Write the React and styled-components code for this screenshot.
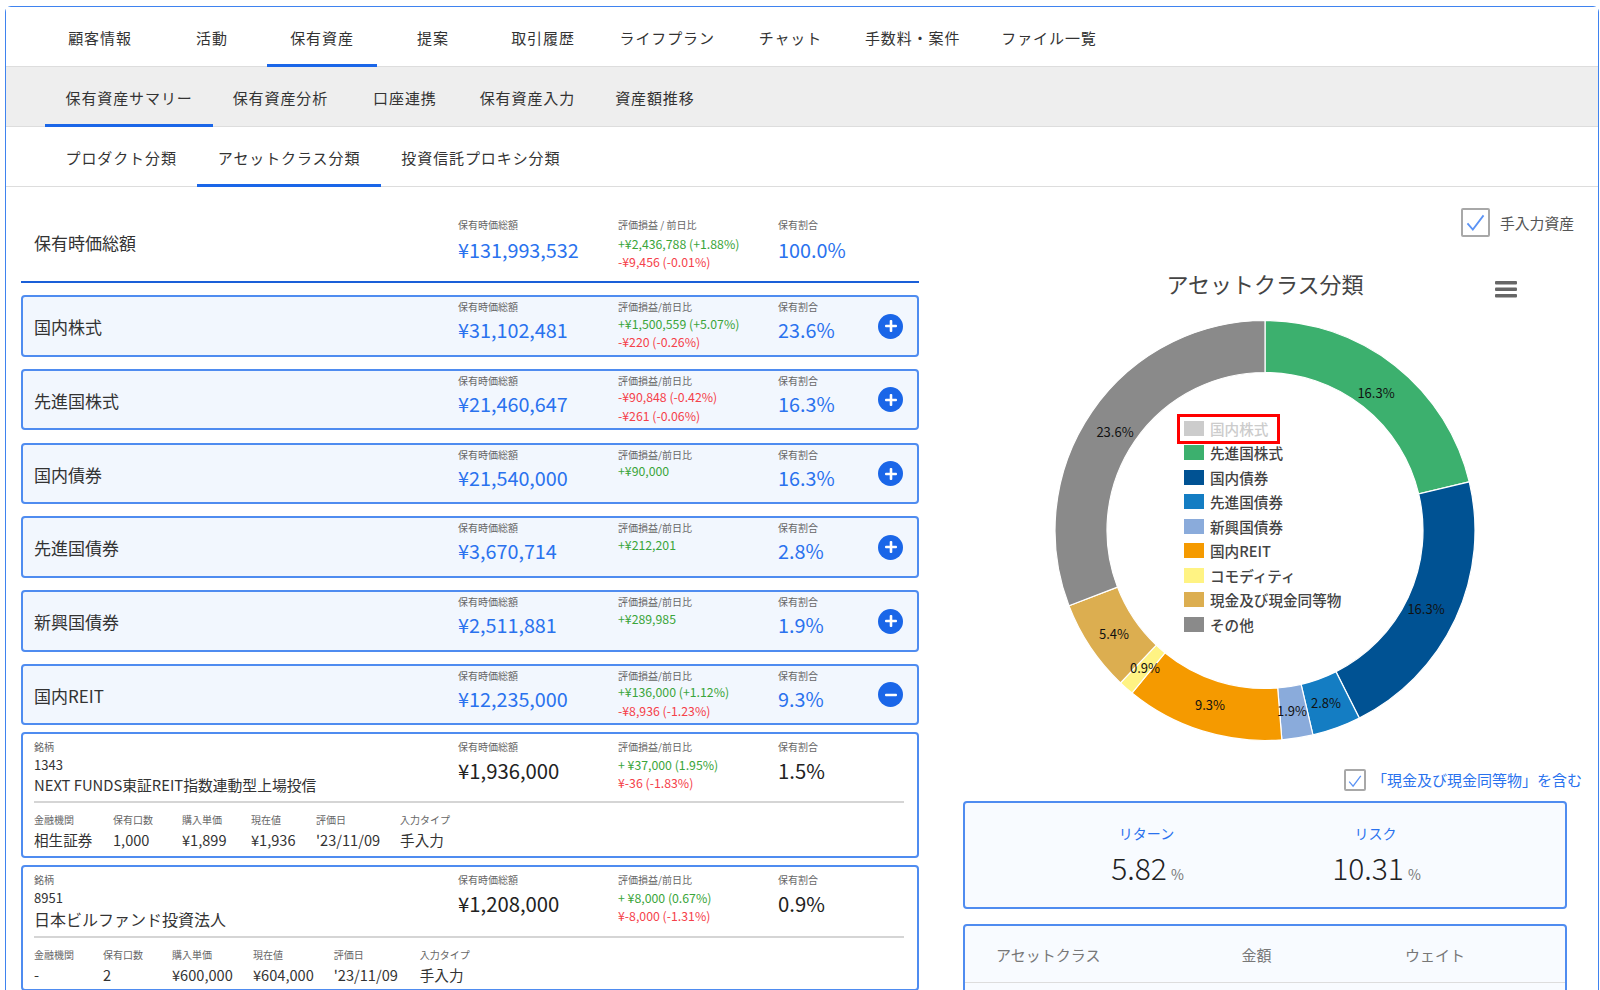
// App.jsx

import React from 'react';
import styled, { createGlobalStyle, css } from "styled-components";

const mainTabs = [
    { label: '顧客情報' },
    { label: '活動', shift: 2 },
    { label: '保有資産' },
    { label: '提案', shift: 1 },
    { label: '取引履歴' },
    { label: 'ライフプラン' },
    { label: 'チャット', shift: -1 },
    { label: '手数料・案件', shift: -2 },
    { label: 'ファイル一覧', shift: -2 },
];
const subTabs = [
    { label: '保有資産サマリー' },
    { label: '保有資産分析', shift: -1 },
    { label: '口座連携', shift: 4 },
    { label: '保有資産入力', shift: 2 },
    { label: '資産額推移', shift: -1 },
];
const classTabs = [
    { label: 'プロダクト分類' },
    { label: 'アセットクラス分類' },
    { label: '投資信託プロキシ分類' },
];

const classRows = [
    { name: '国内株式', total: '¥31,102,481', gain: '+¥1,500,559 (+5.07%)', day: '-¥220 (-0.26%)', share: '23.6%' },
    { name: '先進国株式', total: '¥21,460,647', loss: '-¥90,848 (-0.42%)', day: '-¥261 (-0.06%)', share: '16.3%' },
    { name: '国内債券', total: '¥21,540,000', gain: '+¥90,000', share: '16.3%' },
    { name: '先進国債券', total: '¥3,670,714', gain: '+¥212,201', share: '2.8%' },
    { name: '新興国債券', total: '¥2,511,881', gain: '+¥289,985', share: '1.9%' },
    { name: '国内REIT', total: '¥12,235,000', gain: '+¥136,000 (+1.12%)', day: '-¥8,936 (-1.23%)', share: '9.3%', open: true },
];

const holdings = [
    {
        code: '1343', name: 'NEXT FUNDS東証REIT指数連動型上場投信', nameSize: 14.8, total: '¥1,936,000',
        gain: '+ ¥37,000 (1.95%)', day: '¥-36 (-1.83%)', share: '1.5%',
        cells: [
            { label: '金融機関', value: '相生証券', min: 59 },
            { label: '保有口数', value: '1,000', min: 49 },
            { label: '購入単価', value: '¥1,899', min: 49 },
            { label: '現在値', value: '¥1,936', min: 45 },
            { label: '評価日', value: "'23/11/09", min: 64 },
            { label: '入力タイプ', value: '手入力', min: 49 },
        ],
    },
    {
        code: '8951', name: '日本ビルファンド投資法人', nameSize: 16, total: '¥1,208,000',
        gain: '+ ¥8,000 (0.67%)', day: '¥-8,000 (-1.31%)', share: '0.9%',
        cells: [
            { label: '金融機関', value: '-', min: 49 },
            { label: '保有口数', value: '2', min: 49 },
            { label: '購入単価', value: '¥600,000', min: 61 },
            { label: '現在値', value: '¥604,000', min: 60 },
            { label: '評価日', value: "'23/11/09", min: 66 },
            { label: '入力タイプ', value: '手入力', min: 49 },
        ],
    },
];

const slices = [
    { from: 0, to: 76.6, color: '#3cb06e' },
    { from: 76.6, to: 153.3, color: '#005293' },
    { from: 153.3, to: 166.8, color: '#147dc3' },
    { from: 166.8, to: 175.4, color: '#8aabdb' },
    { from: 175.4, to: 219.3, color: '#f59a00' },
    { from: 219.3, to: 223.5, color: '#fff383' },
    { from: 223.5, to: 249, color: '#dcae50' },
    { from: 249, to: 360, color: '#8a8a8a' },
];

const sliceLabels = [
    { x: 413, y: 82, text: '16.3%' },
    { x: 463, y: 298, text: '16.3%' },
    { x: 363, y: 392, text: '2.8%' },
    { x: 329, y: 400, text: '1.9%' },
    { x: 247, y: 394, text: '9.3%' },
    { x: 182, y: 357, text: '0.9%' },
    { x: 151, y: 323, text: '5.4%' },
    { x: 152, y: 121, text: '23.6%' },
];

const legend = [
    { name: '国内株式', color: '#cccccc', off: true },
    { name: '先進国株式', color: '#3cb06e' },
    { name: '国内債券', color: '#005293' },
    { name: '先進国債券', color: '#147dc3' },
    { name: '新興国債券', color: '#8aabdb' },
    { name: '国内REIT', color: '#f59a00' },
    { name: 'コモディティ', color: '#fff383' },
    { name: '現金及び現金同等物', color: '#dcae50' },
    { name: 'その他', color: '#8a8a8a' },
];

const point = (deg, r) => {
    const a = (deg - 90) * Math.PI / 180;
    return `${(302 + r * Math.cos(a)).toFixed(2)} ${(220.5 + r * Math.sin(a)).toFixed(2)}`;
};

const arcPath = (from, to) => {
    const big = to - from > 180 ? 1 : 0;
    return `M${point(from, 210)} A210 210 0 ${big} 1 ${point(to, 210)} L${point(to, 158)} A158 158 0 ${big} 0 ${point(from, 158)} Z`;
};

const Stat = ({ label, value, dark, top }) => (
    <StatCol>
        <StatLabel>{label}</StatLabel>
        <StatValue $dark={dark} $top={top}>{value}</StatValue>
    </StatCol>
);

const Change = ({ label, gain, loss, day, top }) => (
    <StatCol>
        <StatLabel>{label}</StatLabel>
        <ChangeLines $top={top}>
            {gain && <ChangeLine $color="#3aa53a">{gain}</ChangeLine>}
            {loss && <ChangeLine $color="#f5414a">{loss}</ChangeLine>}
            {day && <ChangeLine $color="#f5414a">{day}</ChangeLine>}
        </ChangeLines>
    </StatCol>
);

const Check = ({ size }) => (
    <CheckBox $size={size}>
        <svg width="100%" height="100%" viewBox="0 0 28 28">
            <polyline points="5,15 11,22 23,6" fill="none" stroke="#5b93f5" strokeWidth="2" />
        </svg>
    </CheckBox>
);

const App = () => {
    return (
        <>
            <GlobalStyle />
            <Frame>
                <TabRow>
                    {mainTabs.map((t) => <MainTab key={t.label} $shift={t.shift} $active={t.label === '保有資産'}>{t.label}</MainTab>)}
                </TabRow>
                <TabRow $gray>
                    {subTabs.map((t) => <Tab key={t.label} $shift={t.shift} $active={t.label === '保有資産サマリー'}>{t.label}</Tab>)}
                </TabRow>
                <TabRow>
                    {classTabs.map((t) => <Tab key={t.label} $active={t.label === 'アセットクラス分類'}>{t.label}</Tab>)}
                </TabRow>

                <Main>
                    <LeftCol>
                        <SummaryRow>
                            <SummaryTitle>保有時価総額</SummaryTitle>
                            <Stat label="保有時価総額" value="¥131,993,532" top={6} />
                            <Change label="評価損益 / 前日比" gain="+¥2,436,788 (+1.88%)" day="-¥9,456 (-0.01%)" top={2.5} />
                            <Stat label="保有割合" value="100.0%" top={6} />
                        </SummaryRow>

                        {classRows.map((row) => (
                            <ClassCard key={row.name} $open={row.open}>
                                <ClassName>{row.name}</ClassName>
                                <Stat label="保有時価総額" value={row.total} top={4} />
                                <Change label="評価損益/前日比" gain={row.gain} loss={row.loss} day={row.day} top={0.5} />
                                <Stat label="保有割合" value={row.share} top={4} />
                                <RoundButton>
                                    <svg width="14" height="14" viewBox="0 0 14 14">
                                        <rect x="1" y="5.7" width="12" height="2.6" rx="1" fill="#fff" />
                                        {!row.open && <rect x="5.7" y="1" width="2.6" height="12" rx="1" fill="#fff" />}
                                    </svg>
                                </RoundButton>
                            </ClassCard>
                        ))}

                        {holdings.map((h) => (
                            <HoldingCard key={h.code}>
                                <HoldingTop>
                                    <div>
                                        <StatLabel>銘柄</StatLabel>
                                        <HoldingCode>{h.code}</HoldingCode>
                                        <HoldingName $size={h.nameSize}>{h.name}</HoldingName>
                                    </div>
                                    <Stat label="保有時価総額" value={h.total} dark top={4.5} />
                                    <Change label="評価損益/前日比" gain={h.gain} loss={h.day} top={2} />
                                    <Stat label="保有割合" value={h.share} dark top={4.5} />
                                </HoldingTop>
                                <HoldingBottom>
                                    {h.cells.map((c) => (
                                        <DetailCell key={c.label} $min={c.min}>
                                            <StatLabel>{c.label}</StatLabel>
                                            <DetailValue>{c.value}</DetailValue>
                                        </DetailCell>
                                    ))}
                                </HoldingBottom>
                            </HoldingCard>
                        ))}
                    </LeftCol>

                    <RightCol>
                        <CheckRow $right="-7px" $top="21px" $gap="10px">
                            <Check size={29} />
                            <CheckText $size={14.8}>手入力資産</CheckText>
                        </CheckRow>

                        <ChartTitle>
                            アセットクラス分類
                            <MenuIcon width="22" height="17" viewBox="0 0 22 17">
                                <rect x="0" y="0" width="22" height="3.6" rx="1" fill="#666" />
                                <rect x="0" y="6.5" width="22" height="3.6" rx="1" fill="#666" />
                                <rect x="0" y="13" width="22" height="3.6" rx="1" fill="#666" />
                            </MenuIcon>
                        </ChartTitle>

                        <ChartWrap>
                            <svg width="604" height="440" viewBox="0 0 604 440">
                                {slices.map((s) => (
                                    <path key={s.color} d={arcPath(s.from, s.to)} fill={s.color} stroke="#fff" strokeWidth="1.2" />
                                ))}
                                {sliceLabels.map((l) => (
                                    <SliceLabel key={l.x} x={l.x} y={l.y} textAnchor="middle" dominantBaseline="central">{l.text}</SliceLabel>
                                ))}
                            </svg>
                            <Legend>
                                {legend.map((item) => (
                                    <LegendItem key={item.name} $off={item.off}>
                                        <Swatch $color={item.color} />
                                        {item.name}
                                    </LegendItem>
                                ))}
                            </Legend>
                        </ChartWrap>

                        <CheckRow $right="-15px" $top="19px" $gap="6px">
                            <Check size={22} />
                            <CheckText $blue $size={15}>「現金及び現金同等物」を含む</CheckText>
                        </CheckRow>

                        <ReturnBox>
                            <Metric>
                                <MetricLabel>リターン</MetricLabel>
                                <MetricValue>5.82<MetricUnit>%</MetricUnit></MetricValue>
                            </Metric>
                            <Metric>
                                <MetricLabel>リスク</MetricLabel>
                                <MetricValue>10.31<MetricUnit>%</MetricUnit></MetricValue>
                            </Metric>
                        </ReturnBox>

                        <TableBox>
                            <TableHead>
                                <span>アセットクラス</span>
                                <HeadCenter>金額</HeadCenter>
                                <HeadCenter>ウェイト</HeadCenter>
                            </TableHead>
                        </TableBox>
                    </RightCol>
                </Main>
            </Frame>
        </>
    );
};

const GlobalStyle = createGlobalStyle`
    html, body {
        margin: 0;
        height: 990px;
        overflow: hidden;
        background: #fff;
    }
    body {
        font-family: "Noto Sans CJK JP", "Noto Sans", sans-serif;
        color: #333;
    }
    * {
        box-sizing: border-box;
    }
`;

const Frame = styled.div`
    margin: 6px 1px 0 5px;
    border: 1px solid #3f83ef;
    border-bottom: none;
    border-radius: 6px 6px 0 0;
    height: 1100px;
`;

const TabRow = styled.div`
    display: flex;
    height: 60px;
    padding-left: 39px;
    background: ${(p) => (p.$gray ? '#eeeeee' : '#fff')};
    border-bottom: 1px solid #dddddd;
`;

const Tab = styled.div`
    padding: 0 20.5px;
    margin-left: ${(p) => p.$shift || 0}px;
    font-size: 15px;
    letter-spacing: 0.9px;
    line-height: 61px;
    height: 60px;
    color: #333;
    white-space: nowrap;
    border-bottom: 3px solid ${(p) => (p.$active ? '#1a66e8' : 'transparent')};
`;

const MainTab = styled(Tab)`
    min-width: 110px;
    padding: 0 21.5px;
    text-align: center;
`;

const Main = styled.div`
    display: grid;
    grid-template-columns: 898px 604px;
    column-gap: 44px;
    padding-left: 15px;
`;

const LeftCol = styled.div`
    display: flex;
    flex-direction: column;
`;

const rowGrid = css`
    display: grid;
    grid-template-columns: 424px 160px 160px 1fr 26px;
`;

const SummaryRow = styled.div`
    ${rowGrid}
    height: 95.5px;
    padding: 31px 0 0 13px;
    border-bottom: 2px solid #1a5fd8;
    margin-bottom: 12.5px;
`;

const SummaryTitle = styled.div`
    font-size: 17px;
    line-height: 24px;
    margin-top: 13px;
    color: #333;
`;

const ClassCard = styled.div`
    ${rowGrid}
    align-items: start;
    height: 61.5px;
    padding: 3px 13px 0 11px;
    background: #f2f7fe;
    border: 2px solid #4f8cf0;
    border-radius: 4px;
    margin-bottom: ${(p) => (p.$open ? '6.5px' : '12.3px')};
`;

const ClassName = styled.div`
    font-size: 17px;
    line-height: 24px;
    margin-top: 15px;
    color: #333;
`;

const StatCol = styled.div`
    display: flex;
    flex-direction: column;
`;

const StatLabel = styled.div`
    font-size: 10px;
    line-height: 14px;
    color: #666;
    white-space: nowrap;
`;

const StatValue = styled.div`
    font-size: ${(p) => (p.$dark ? 20.3 : 19.8)}px;
    line-height: 24px;
    margin-top: ${(p) => p.$top}px;
    color: ${(p) => (p.$dark ? '#222' : '#2a72ee')};
    white-space: nowrap;
`;

const ChangeLines = styled.div`
    margin-top: ${(p) => p.$top}px;
`;

const ChangeLine = styled.div`
    font-size: 12.3px;
    line-height: 18.5px;
    color: ${(p) => p.$color};
    white-space: nowrap;
`;

const RoundButton = styled.div`
    display: flex;
    align-items: center;
    justify-content: center;
    width: 25px;
    height: 25px;
    margin-top: 13.5px;
    border-radius: 50%;
    background: #1a66e8;
`;

const HoldingCard = styled.div`
    height: 126px;
    padding: 6px 13px 0 11px;
    border: 2px solid #4f8cf0;
    border-radius: 4px;
    background: #fff;
    margin-bottom: 7px;
`;

const HoldingTop = styled.div`
    ${rowGrid}
    grid-template-columns: 424px 160px 160px 1fr;
    padding-bottom: 5px;
    border-bottom: 2px solid #d5d5d5;
`;

const HoldingCode = styled.div`
    font-size: 13px;
    line-height: 18px;
    margin-top: 2.5px;
    color: #333;
`;

const HoldingName = styled.div`
    font-size: ${(p) => p.$size}px;
    line-height: ${(p) => (p.$size > 15 ? 24 : 22)}px;
    color: #333;
    white-space: nowrap;
`;

const HoldingBottom = styled.div`
    display: flex;
    gap: 20px;
    padding-top: 10px;
`;

const DetailCell = styled.div`
    min-width: ${(p) => p.$min}px;
`;

const DetailValue = styled.div`
    font-size: 14.6px;
    line-height: 20px;
    margin-top: 3px;
    color: #333;
    white-space: nowrap;
`;

const RightCol = styled.div`
    display: flex;
    flex-direction: column;
`;

const CheckRow = styled.div`
    display: flex;
    align-items: center;
    justify-content: flex-end;
    gap: ${(p) => p.$gap};
    margin-top: ${(p) => p.$top};
    margin-right: ${(p) => p.$right};
`;

const CheckBox = styled.div`
    width: ${(p) => p.$size}px;
    height: ${(p) => p.$size}px;
    border: 2px solid #a8a8a8;
    border-radius: 2px;
`;

const CheckText = styled.div`
    font-size: ${(p) => p.$size}px;
    line-height: 20px;
    color: ${(p) => (p.$blue ? '#2a72ee' : '#555')};
`;

const ChartTitle = styled.div`
    position: relative;
    margin-top: 31px;
    font-size: 22px;
    line-height: 30px;
    text-align: center;
    color: #444;
`;

const MenuIcon = styled.svg`
    position: absolute;
    right: 50px;
    top: 13px;
`;

const ChartWrap = styled.div`
    position: relative;
    height: 440px;
    margin-top: 12px;
`;

const SliceLabel = styled.text`
    font-size: 13px;
    fill: #111;
`;

const Legend = styled.div`
    position: absolute;
    left: 221px;
    top: 106px;
`;

const LegendItem = styled.div`
    position: relative;
    display: flex;
    align-items: center;
    gap: 6px;
    height: 24.5px;
    font-size: 14.6px;
    font-weight: 500;
    white-space: nowrap;
    color: ${(p) => (p.$off ? '#cccccc' : '#444')};

    ${(p) => p.$off && css`
        &::after {
            content: '';
            position: absolute;
            left: -7px;
            top: -2px;
            width: 97px;
            height: 24px;
            border: 3px solid #f00;
        }
    `}
`;

const Swatch = styled.span`
    width: 20px;
    height: 15px;
    background: ${(p) => p.$color};
`;

const ReturnBox = styled.div`
    display: flex;
    height: 107.5px;
    margin-top: 10px;
    padding: 20px 0 0 67px;
    background: #f8fbff;
    border: 2px solid #4f8cf0;
    border-radius: 4px;
`;

const Metric = styled.div`
    width: 229px;
    text-align: center;
`;

const MetricLabel = styled.div`
    font-size: 14px;
    line-height: 20px;
    color: #2a72ee;
`;

const MetricValue = styled.div`
    font-size: 30px;
    font-weight: 300;
    line-height: 40px;
    margin-top: 4px;
    color: #222;
    padding-left: 2px;
`;

const MetricUnit = styled.span`
    font-size: 14px;
    font-weight: 400;
    color: #777;
    margin-left: 4px;
`;

const TableBox = styled.div`
    height: 120px;
    margin-top: 15.5px;
    background: #f8fbff;
    border: 2px solid #4f8cf0;
    border-radius: 4px;
`;

const TableHead = styled.div`
    display: grid;
    grid-template-columns: 198px 125px 1fr;
    align-items: center;
    height: 57px;
    padding: 0 14px 0 31px;
    border-bottom: 1px solid #dddddd;
    font-size: 15px;
    color: #777;
`;

const HeadCenter = styled.span`
    text-align: center;
`;

export default App;
